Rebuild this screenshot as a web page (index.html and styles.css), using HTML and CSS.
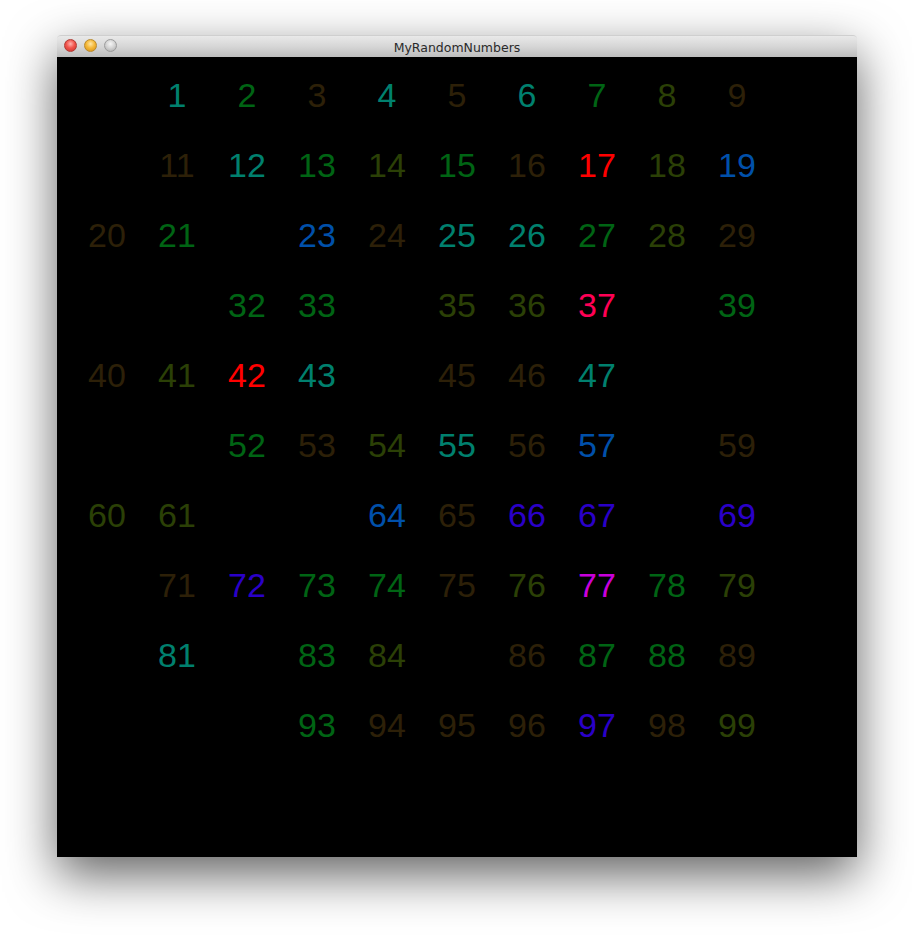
FILE: index.html
```html
<!DOCTYPE html>
<html>
<head>
<meta charset="utf-8">
<title>MyRandomNumbers</title>
<link rel="stylesheet" href="styles.css">
</head>
<body>
<div class="window">
  <div class="titlebar">
    <div class="lights">
      <span class="light red"></span>
      <span class="light yellow"></span>
      <span class="light gray"></span>
    </div>
    <div class="title">MyRandomNumbers</div>
  </div>
  <div class="canvas">
    <div class="grid">
      <span class="cell"></span><span class="cell teal">1</span><span class="cell green">2</span><span class="cell brown">3</span><span class="cell teal">4</span><span class="cell brown">5</span><span class="cell teal">6</span><span class="cell green">7</span><span class="cell olive">8</span><span class="cell brown">9</span>
      <span class="cell"></span><span class="cell brown">11</span><span class="cell teal">12</span><span class="cell green">13</span><span class="cell olive">14</span><span class="cell green">15</span><span class="cell brown">16</span><span class="cell red">17</span><span class="cell olive">18</span><span class="cell blue">19</span>
      <span class="cell brown">20</span><span class="cell green">21</span><span class="cell"></span><span class="cell blue">23</span><span class="cell brown">24</span><span class="cell teal">25</span><span class="cell teal">26</span><span class="cell green">27</span><span class="cell olive">28</span><span class="cell brown">29</span>
      <span class="cell"></span><span class="cell"></span><span class="cell green">32</span><span class="cell green">33</span><span class="cell"></span><span class="cell olive">35</span><span class="cell olive">36</span><span class="cell pink">37</span><span class="cell"></span><span class="cell green">39</span>
      <span class="cell brown">40</span><span class="cell olive">41</span><span class="cell red">42</span><span class="cell teal">43</span><span class="cell"></span><span class="cell brown">45</span><span class="cell brown">46</span><span class="cell teal">47</span><span class="cell"></span><span class="cell"></span>
      <span class="cell"></span><span class="cell"></span><span class="cell green">52</span><span class="cell brown">53</span><span class="cell olive">54</span><span class="cell teal">55</span><span class="cell brown">56</span><span class="cell blue">57</span><span class="cell"></span><span class="cell brown">59</span>
      <span class="cell olive">60</span><span class="cell olive">61</span><span class="cell"></span><span class="cell"></span><span class="cell blue">64</span><span class="cell brown">65</span><span class="cell purple">66</span><span class="cell purple">67</span><span class="cell"></span><span class="cell purple">69</span>
      <span class="cell"></span><span class="cell brown">71</span><span class="cell purple">72</span><span class="cell green">73</span><span class="cell green">74</span><span class="cell brown">75</span><span class="cell olive">76</span><span class="cell magenta">77</span><span class="cell green">78</span><span class="cell olive">79</span>
      <span class="cell"></span><span class="cell teal">81</span><span class="cell"></span><span class="cell green">83</span><span class="cell olive">84</span><span class="cell"></span><span class="cell brown">86</span><span class="cell green">87</span><span class="cell green">88</span><span class="cell brown">89</span>
      <span class="cell"></span><span class="cell"></span><span class="cell"></span><span class="cell green">93</span><span class="cell brown">94</span><span class="cell brown">95</span><span class="cell brown">96</span><span class="cell purple">97</span><span class="cell brown">98</span><span class="cell olive">99</span>
    </div>
  </div>
</div>
</body>
</html>
```

FILE: styles.css
```css
html, body {
  margin: 0;
  padding: 0;
  background: #ffffff;
}

body {
  width: 914px;
  height: 936px;
  overflow: hidden;
  padding-top: 35px;
  padding-left: 57px;
  box-sizing: border-box;
}

.window {
  width: 800px;
  box-shadow: 0 18px 50px rgba(0, 0, 0, 0.62);
  border-radius: 4px 4px 0 0;
}

.titlebar {
  position: relative;
  height: 22px;
  box-sizing: border-box;
  border-radius: 4px 4px 0 0;
  border-top: 1px solid #cfcfcf;
  background: linear-gradient(to bottom, #e9e9e9 0%, #d6d6d6 50%, #bdbdbd 100%);
  display: flex;
  align-items: center;
  justify-content: center;
}

.lights {
  position: absolute;
  left: 7px;
  top: 3px;
  display: flex;
  gap: 7px;
}

.light {
  width: 13px;
  height: 13px;
  border-radius: 50%;
  box-sizing: border-box;
}

.light.red {
  background: radial-gradient(circle at 50% 35%, #ffb3ae 0%, #f2554d 45%, #c8302a 100%);
  border: 1px solid #b03a33;
}

.light.yellow {
  background: radial-gradient(circle at 50% 35%, #ffe7a6 0%, #f5b93a 45%, #d48d12 100%);
  border: 1px solid #b98a2b;
}

.light.gray {
  background: radial-gradient(circle at 50% 35%, #f6f6f6 0%, #d2d2d2 50%, #a8a8a8 100%);
  border: 1px solid #9c9c9c;
}

.title {
  font-family: "DejaVu Sans", "Liberation Sans", sans-serif;
  font-size: 12.5px;
  color: #2a2a2a;
  margin-top: 1px;
}

.canvas {
  width: 800px;
  height: 800px;
  background: #000000;
  overflow: hidden;
}

.grid {
  display: grid;
  grid-template-columns: repeat(10, 70px);
  grid-auto-rows: 70px;
  padding-left: 15px;
  padding-top: 3px;
  font-family: "Liberation Sans", Arial, sans-serif;
  font-size: 34px;
  line-height: 70px;
}

.cell {
  text-align: center;
}

.teal { color: #00806e; }
.green { color: #006414; }
.brown { color: #2d2008; }
.olive { color: #2b4006; }
.blue { color: #0050aa; }
.red { color: #ff0000; }
.pink { color: #ff0055; }
.purple { color: #2a00c8; }
.magenta { color: #c800dc; }
```
